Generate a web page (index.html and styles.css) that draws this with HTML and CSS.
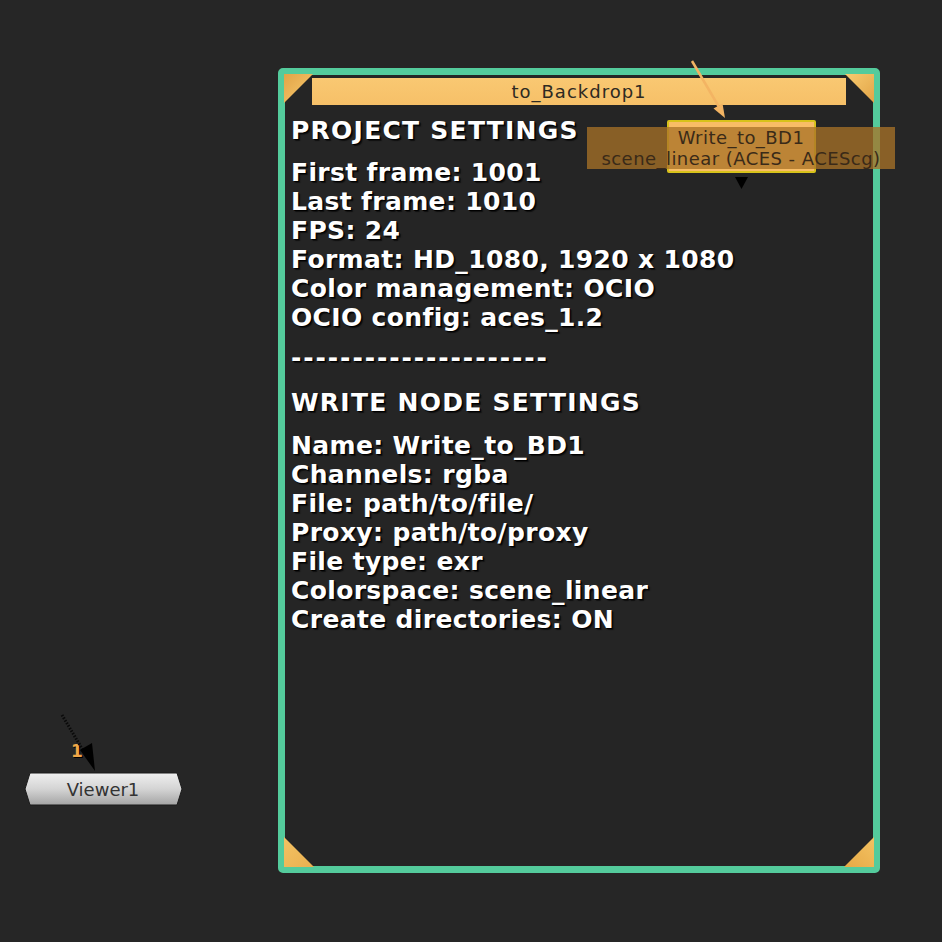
FILE: index.html
```html
<!DOCTYPE html>
<html>
<head>
<meta charset="utf-8">
<link rel="stylesheet" href="styles.css">
</head>
<body>
<div class="canvas">
  <div class="backdrop">
    <div class="bd-title">to_Backdrop1</div>
    <div class="bd-label">
      <div class="line head">PROJECT SETTINGS</div>
      <div class="group">
        <div class="line">First frame: 1001</div>
        <div class="line">Last frame: 1010</div>
        <div class="line">FPS: 24</div>
        <div class="line">Format: HD_1080, 1920 x 1080</div>
        <div class="line">Color management: OCIO</div>
        <div class="line">OCIO config: aces_1.2</div>
      </div>
      <div class="line sep">---------------------</div>
      <div class="line head head2">WRITE NODE SETTINGS</div>
      <div class="group">
        <div class="line">Name: Write_to_BD1</div>
        <div class="line">Channels: rgba</div>
        <div class="line">File: path/to/file/</div>
        <div class="line">Proxy: path/to/proxy</div>
        <div class="line">File type: exr</div>
        <div class="line">Colorspace: scene_linear</div>
        <div class="line">Create directories: ON</div>
      </div>
    </div>
    <svg class="corner tl" width="30" height="30" viewBox="0 0 30 30"><defs><linearGradient id="g1" x1="0" y1="0" x2="1" y2="1"><stop offset="0" stop-color="#e2a447"/><stop offset="1" stop-color="#f8cb70"/></linearGradient></defs><polygon points="0,0 29,0 0,29" fill="url(#g1)"/></svg>
    <svg class="corner tr" width="30" height="30" viewBox="0 0 30 30"><defs><linearGradient id="g2" x1="0" y1="0" x2="1" y2="1"><stop offset="0" stop-color="#f8cb70"/><stop offset="1" stop-color="#e2a447"/></linearGradient></defs><polygon points="1,0 30,0 30,29" fill="url(#g2)"/></svg>
    <svg class="corner bl" width="30" height="30" viewBox="0 0 30 30"><defs><linearGradient id="g3" x1="0" y1="0" x2="1" y2="1"><stop offset="0" stop-color="#f4c263"/><stop offset="1" stop-color="#e9b050"/></linearGradient></defs><polygon points="0,0 0,30 30,30" fill="url(#g3)"/></svg>
    <svg class="corner br" width="30" height="30" viewBox="0 0 30 30"><defs><linearGradient id="g4" x1="1" y1="0" x2="0" y2="1"><stop offset="0" stop-color="#f4c263"/><stop offset="1" stop-color="#e5a845"/></linearGradient></defs><polygon points="30,0 30,30 0,30" fill="url(#g4)"/></svg>
  </div>

  <div class="write-node"></div>
  <div class="write-band">
    <div>Write_to_BD1</div>
    <div>scene_linear (ACES - ACEScg)</div>
  </div>

  <div class="viewer">
    <svg class="viewer-shape" width="160" height="34" viewBox="0 0 160 34">
      <defs><linearGradient id="vg" x1="0" y1="0" x2="0" y2="1"><stop offset="0" stop-color="#f0f0f0"/><stop offset="0.5" stop-color="#d4d4d4"/><stop offset="1" stop-color="#a4a4a4"/></linearGradient></defs>
      <polygon points="1,17 6,1 153,1 158,17 153,33 6,33" fill="url(#vg)" stroke="#1a1a1a" stroke-width="1"/>
    </svg>
    <span class="viewer-text">Viewer1</span>
  </div>
  <div class="input-num">1</div>

  <svg class="wires" width="942" height="942" viewBox="0 0 942 942">
    <line x1="692" y1="61" x2="719" y2="107" stroke="#f3b463" stroke-width="2.5"/>
    <polygon points="725,118 722.5,103.5 713.5,108.5" fill="#f3b463"/>
    <polygon points="735,177 748,177 741.5,189" fill="#000"/>
    <line x1="62" y1="715" x2="84" y2="752" stroke="#0a0a0a" stroke-width="3" stroke-dasharray="1.5 1.5"/>
    <polygon points="80,750 92,743 95,771" fill="#000"/>
  </svg>
</div>
</body>
</html>
```
FILE: styles.css
```css
html, body {
  margin: 0;
  padding: 0;
  background: #262626;
}
.canvas {
  position: relative;
  width: 942px;
  height: 942px;
  overflow: hidden;
  background: #262626;
}
.backdrop {
  position: absolute;
  left: 278px;
  top: 68px;
  width: 602px;
  height: 805px;
  box-sizing: border-box;
  border: 7px solid #54cb9c;
  border-radius: 5px;
  background: #252525;
  display: flex;
  flex-direction: column;
}
.bd-title {
  margin: 3px 27px 0 27px;
  height: 27px;
  background: linear-gradient(#f9c872, #f6c068);
  color: #2e2a22;
  font-family: "DejaVu Sans", Verdana, sans-serif;
  font-size: 18px;
  letter-spacing: 1px;
  line-height: 27px;
  text-align: center;
}
.bd-label {
  margin-top: 11px;
  padding-left: 6px;
  font-family: "DejaVu Sans", Verdana, sans-serif;
  font-weight: bold;
  font-size: 25px;
  letter-spacing: 0.35px;
  color: #ffffff;
  text-shadow: 1px 1px 0 #000, 2px 2px 1px rgba(0,0,0,0.6);
}
.line {
  height: 29px;
  line-height: 29px;
  white-space: nowrap;
}
.head {
  margin-bottom: 13px;
  letter-spacing: 1.25px;
}
.sep {
  margin-top: 11px;
  letter-spacing: 1.9px;
}
.head2 {
  margin-top: 16px;
  margin-bottom: 14px;
}
.corner {
  position: absolute;
}
.corner.tl { left: -1px; top: -1px; }
.corner.tr { right: -1px; top: -1px; }
.corner.bl { left: -1px; bottom: -1px; }
.corner.br { right: -1px; bottom: -1px; }

.write-node {
  position: absolute;
  left: 667px;
  top: 120px;
  width: 149px;
  height: 53px;
  box-sizing: border-box;
  background: #f8bd66;
  border: 2px solid #d7c21a;
  border-radius: 2px;
}
.write-band {
  position: absolute;
  left: 587px;
  top: 127px;
  width: 308px;
  height: 42px;
  background: rgba(168, 114, 40, 0.76);
  color: #3a2a18;
  font-family: "DejaVu Sans", Verdana, sans-serif;
  font-size: 18px;
  letter-spacing: 0.45px;
  line-height: 21px;
  text-align: center;
  white-space: nowrap;
}
.viewer {
  position: absolute;
  left: 24px;
  top: 772px;
  width: 160px;
  height: 34px;
  display: flex;
  align-items: center;
  justify-content: center;
}
.viewer-shape {
  position: absolute;
  left: 0;
  top: 0;
}
.viewer-text {
  position: relative;
  font-family: "DejaVu Sans", Verdana, sans-serif;
  font-size: 18px;
  color: #333;
  margin-left: -2px;
}
.input-num {
  position: absolute;
  left: 71px;
  top: 741px;
  font-family: "DejaVu Sans", Verdana, sans-serif;
  font-weight: bold;
  font-size: 17px;
  color: #f0a648;
  text-shadow: 1px 1px 0 #000;
}
.wires {
  position: absolute;
  left: 0;
  top: 0;
  pointer-events: none;
}
```
